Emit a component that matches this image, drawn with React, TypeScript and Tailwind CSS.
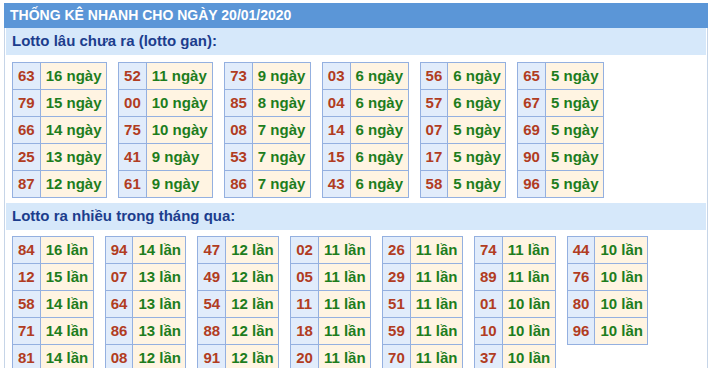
import React from 'react';

type Row = [string, number];

const ganTables: Row[][] = [
  [['63', 16], ['79', 15], ['66', 14], ['25', 13], ['87', 12]],
  [['52', 11], ['00', 10], ['75', 10], ['41', 9], ['61', 9]],
  [['73', 9], ['85', 8], ['08', 7], ['53', 7], ['86', 7]],
  [['03', 6], ['04', 6], ['14', 6], ['15', 6], ['43', 6]],
  [['56', 6], ['57', 6], ['07', 5], ['17', 5], ['58', 5]],
  [['65', 5], ['67', 5], ['69', 5], ['90', 5], ['96', 5]],
];

const nhieuTables: Row[][] = [
  [['84', 16], ['12', 15], ['58', 14], ['71', 14], ['81', 14]],
  [['94', 14], ['07', 13], ['64', 13], ['86', 13], ['08', 12]],
  [['47', 12], ['49', 12], ['54', 12], ['88', 12], ['91', 12]],
  [['02', 11], ['05', 11], ['11', 11], ['18', 11], ['20', 11]],
  [['26', 11], ['29', 11], ['51', 11], ['59', 11], ['70', 11]],
  [['74', 11], ['89', 11], ['01', 10], ['10', 10], ['37', 10]],
  [['44', 10], ['76', 10], ['80', 10], ['96', 10]],
];

function StatTable({ rows, unit }: { rows: Row[]; unit: string }) {
  return (
    <table className="border-collapse self-start">
      <tbody>
        {rows.map(([num, count]) => (
          <tr key={num}>
            <td className="h-[27px] border border-[#94b0e0] bg-[#e1ecfb] px-[5px] text-[#b13c22] whitespace-nowrap">
              {num}
            </td>
            <td className="h-[27px] border border-[#94b0e0] bg-[#fff4e2] pl-[5px] pr-[4.5px] text-[#1d7d1d] whitespace-nowrap">
              {count} {unit}
            </td>
          </tr>
        ))}
      </tbody>
    </table>
  );
}

function SectionTitle({ children }: { children: React.ReactNode }) {
  return (
    <div className="h-[27px] bg-[#d6e8fa] px-[6px] flex items-center text-[15px] font-bold text-[#1c3d8d]">
      {children}
    </div>
  );
}

export default function App() {
  return (
    <div className="h-[368px] overflow-hidden bg-white pt-[3px] pl-[4px] font-['Liberation_Sans',Arial,sans-serif]">
      <div className="w-[704px]">
        <div className="h-[25px] bg-[#5b96d7] px-[6px] flex items-center text-[14px] font-bold text-white">
          THỐNG KÊ NHANH CHO NGÀY 20/01/2020
        </div>
        <div className="border-x border-[#c6d5e8] px-px pb-2">
          <SectionTitle>Lotto lâu chưa ra (lotto gan):</SectionTitle>
          <div className="flex gap-[11px] px-[6px] pt-[7px] pb-[5px] text-[15px] font-bold">
            {ganTables.map((rows, i) => (
              <StatTable key={i} rows={rows} unit="ngày" />
            ))}
          </div>
          <SectionTitle>Lotto ra nhiều trong tháng qua:</SectionTitle>
          <div className="flex gap-[11px] px-[6px] pt-[6px] text-[15px] font-bold">
            {nhieuTables.map((rows, i) => (
              <StatTable key={i} rows={rows} unit="lần" />
            ))}
          </div>
        </div>
      </div>
    </div>
  );
}
